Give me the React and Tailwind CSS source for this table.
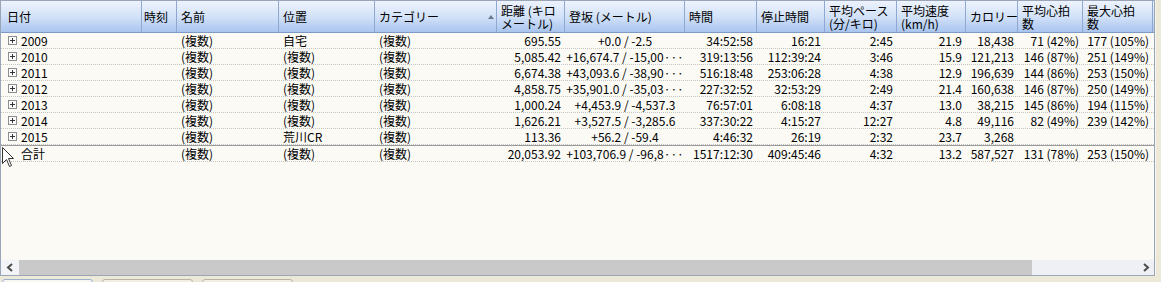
const columns = [
  { label: ["日付"], w: "w-[141px]", align: "left", pad: "pl-[6px]" },
  { label: ["時刻"], w: "w-[35px]", align: "left", pad: "pl-[2px]" },
  { label: ["名前"], w: "w-[102px]", align: "left", pad: "pl-[4px]" },
  { label: ["位置"], w: "w-[96px]", align: "left", pad: "pl-[4px]" },
  { label: ["カテゴリー"], w: "w-[122px]", align: "left", pad: "pl-[4px]", sort: true },
  { label: ["距離 (キロ", "メートル)"], w: "w-[68px]", align: "right", pad: "pl-[4px]" },
  { label: ["登坂 (メートル)"], w: "w-[120px]", align: "center", pad: "pl-[4px]" },
  { label: ["時間"], w: "w-[72px]", align: "right", pad: "pl-[4px]" },
  { label: ["停止時間"], w: "w-[68px]", align: "right", pad: "pl-[4px]" },
  { label: ["平均ペース", "(分/キロ)"], w: "w-[72px]", align: "right", pad: "pl-[4px]" },
  { label: ["平均速度", "(km/h)"], w: "w-[69px]", align: "right", pad: "pl-[4px]" },
  { label: ["カロリー"], w: "w-[52px]", align: "right", pad: "pl-[4px]" },
  { label: ["平均心拍", "数"], w: "w-[65px]", align: "right", pad: "pl-[4px]" },
  { label: ["最大心拍", "数"], w: "w-[70px]", align: "right", pad: "pl-[4px]" },
];

const rows = [
  ["2009", "", "(複数)", "自宅", "(複数)", "695.55", "+0.0 / -2.5", "34:52:58", "16:21", "2:45", "21.9", "18,438", "71 (42%)", "177 (105%)"],
  ["2010", "", "(複数)", "(複数)", "(複数)", "5,085.42", "+16,674.7 / -15,00···", "319:13:56", "112:39:24", "3:46", "15.9", "121,213", "146 (87%)", "251 (149%)"],
  ["2011", "", "(複数)", "(複数)", "(複数)", "6,674.38", "+43,093.6 / -38,90···", "516:18:48", "253:06:28", "4:38", "12.9", "196,639", "144 (86%)", "253 (150%)"],
  ["2012", "", "(複数)", "(複数)", "(複数)", "4,858.75", "+35,901.0 / -35,03···", "227:32:52", "32:53:29", "2:49", "21.4", "160,638", "146 (87%)", "250 (149%)"],
  ["2013", "", "(複数)", "(複数)", "(複数)", "1,000.24", "+4,453.9 / -4,537.3", "76:57:01", "6:08:18", "4:37", "13.0", "38,215", "145 (86%)", "194 (115%)"],
  ["2014", "", "(複数)", "(複数)", "(複数)", "1,626.21", "+3,527.5 / -3,285.6", "337:30:22", "4:15:27", "12:27", "4.8", "49,116", "82 (49%)", "239 (142%)"],
  ["2015", "", "(複数)", "荒川CR", "(複数)", "113.36", "+56.2 / -59.4", "4:46:32", "26:19", "2:32", "23.7", "3,268", "", ""],
];

const total = ["合計", "", "(複数)", "(複数)", "(複数)", "20,053.92", "+103,706.9 / -96,8···", "1517:12:30", "409:45:46", "4:32", "13.2", "587,527", "131 (78%)", "253 (150%)"];

const alignClass = {
  left: "justify-start",
  right: "justify-end pr-[4px]",
  center: "justify-center",
};

const PlusBox = () => (
  <span className="w-[9px] h-[9px] border border-[#8c8c8c] bg-white flex items-center justify-center mr-[4px]">
    <svg width="7" height="7" viewBox="0 0 7 7">
      <path d="M1 3.5h5M3.5 1v5" stroke="#333" strokeWidth="1" />
    </svg>
  </span>
);

const Row = ({ cells, isTotal }) => (
  <div
    className={
      "flex border-b border-dotted border-[#c4c4c4] " +
      (isTotal ? "h-[17px] border-t border-t-[#9a9a9a]" : "h-[16px]")
    }
    style={isTotal ? { borderTopStyle: "solid" } : undefined}
  >
    {columns.map((col, i) => (
      <div
        key={i}
        className={`${col.w} shrink-0 flex items-center whitespace-nowrap ${alignClass[col.align]} ${
          i === 0 ? "pl-[7px]" : col.align === "left" ? "pl-[4px]" : ""
        }`}
      >
        {i === 0 && !isTotal && <PlusBox />}
        {i === 0 && isTotal && <span className="w-[13px]" />}
        {cells[i]}
      </div>
    ))}
  </div>
);

const Chevron = ({ dir }) => (
  <svg width="8" height="9" viewBox="0 0 8 9">
    <path
      d={dir === "left" ? "M6 1L2 4.5L6 8" : "M2 1L6 4.5L2 8"}
      stroke="#4a4a4a"
      strokeWidth="2"
      fill="none"
    />
  </svg>
);

export default function App() {
  return (
    <div
      className="relative w-[1161px] h-[282px] bg-[#ece9d8] overflow-hidden text-[12px] text-black"
      style={{ fontFamily: '"Liberation Sans Narrow", "Noto Sans CJK JP", sans-serif' }}
    >
      <div className="flex">
        <div className="w-[1155px] h-[276px] border border-[#9aa6b8] bg-[#fbfaf5] flex flex-col">
          {/* header */}
          <div className="flex h-[32px] bg-linear-to-b from-[#edf3fd] via-[#d3e2f8] to-[#a9c5ef] border-b border-[#7f9ac4]">
            {columns.map((col, i) => (
              <div
                key={i}
                className={`${col.w} shrink-0 relative flex items-center ${col.pad} border-r border-[#8ea8cf] leading-[13px]`}
              >
                <div className="flex flex-col">
                  {col.label.map((l, j) => (
                    <span key={j} className="whitespace-nowrap">
                      {l}
                    </span>
                  ))}
                </div>
                {col.sort && (
                  <svg className="absolute right-[2px] top-[14px]" width="6" height="4" viewBox="0 0 6 4">
                    <path d="M3 0L6 4H0Z" fill="#6b7a90" />
                  </svg>
                )}
              </div>
            ))}
          </div>

          {/* rows */}
          {rows.map((r, i) => (
            <Row key={i} cells={r} />
          ))}
          <Row cells={total} isTotal />

          <div className="flex-1" />

          {/* horizontal scrollbar */}
          <div className="h-[16px] flex bg-[#eef0f5] border-t border-[#f8f8f8]">
            <div className="w-[18px] flex items-center justify-center bg-[#f3f4f7]">
              <Chevron dir="left" />
            </div>
            <div className="w-[1013px] bg-[#c9c9c9]" />
            <div className="flex-1" />
            <div className="w-[16px] flex items-center justify-center">
              <Chevron dir="right" />
            </div>
          </div>
        </div>
        <div className="flex-1 border-l border-[#f6f5ee]" />
      </div>

      {/* tabs */}
      <div className="flex gap-[9px] pl-[2px] mt-[3px]">
        <div className="w-[91px] h-[8px] rounded-t-[3px] border border-[#9db0cf] bg-[#f6f6f2]" />
        <div className="w-[91px] h-[8px] rounded-t-[3px] border border-[#b8b5a6] bg-[#f1efe4]" />
        <div className="w-[91px] h-[8px] rounded-t-[3px] border border-[#b8b5a6] bg-[#f1efe4]" />
      </div>

      {/* mouse cursor */}
      <svg className="absolute left-[2px] top-[147px]" width="13" height="21" viewBox="0 0 13 21">
        <path
          d="M0.5 0.5V16.5L4.5 12.5L7.5 19.5L9.5 18.5L6.5 11.5H11.5Z"
          fill="white"
          stroke="#333"
          strokeWidth="1"
        />
      </svg>
    </div>
  );
}
